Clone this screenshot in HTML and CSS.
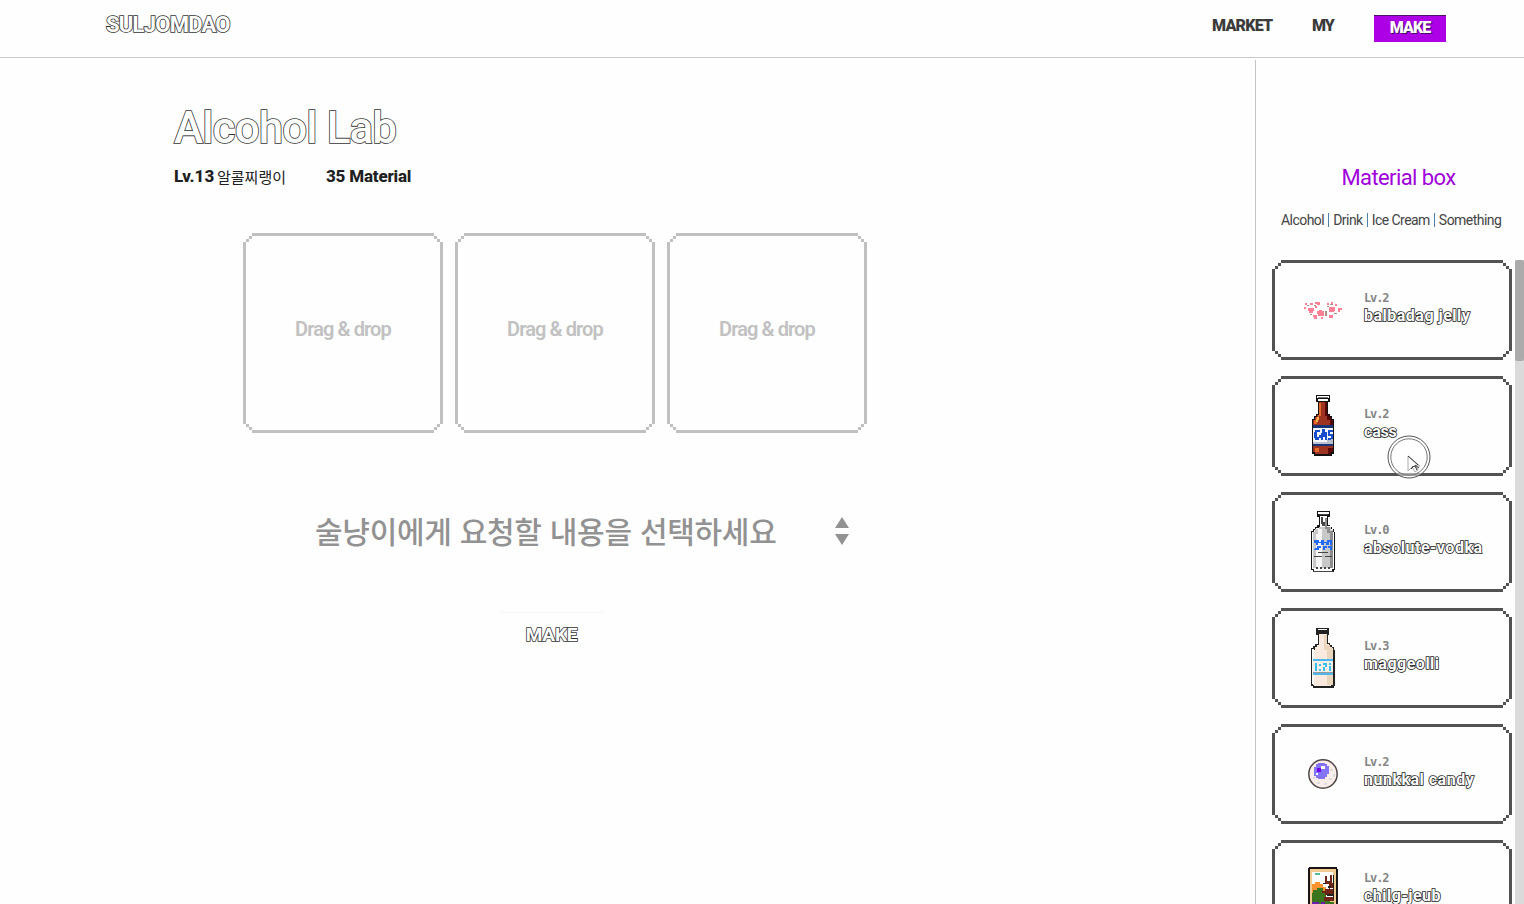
FILE: index.html
```html
<!DOCTYPE html>
<html lang="ko">
<head>
<meta charset="utf-8">
<title>Alcohol Lab</title>
<link rel="stylesheet" href="styles.css">
</head>
<body>
<header class="header">
  <a class="logo">SULJOMDAO</a>
  <nav class="nav">
    <a class="nav-market">MARKET</a>
    <a class="nav-my">MY</a>
    <a class="nav-make"><span>MAKE</span></a>
  </nav>
</header>
<div class="page">
  <main class="lab">
    <h1 class="title">Alcohol Lab</h1>
    <div class="info">
      <span class="level">Lv.13</span><span class="user">알콜찌랭이</span><span class="count">35 Material</span>
    </div>
    <div class="slots">
      <div class="slot pixel-box"><span>Drag &amp; drop</span></div>
      <div class="slot pixel-box"><span>Drag &amp; drop</span></div>
      <div class="slot pixel-box"><span>Drag &amp; drop</span></div>
    </div>
    <div class="request">
      <span>술냥이에게 요청할 내용을 선택하세요</span>
      <svg width="14" height="28" viewBox="0 0 14 28"><path d="M7 0l7 11H0zM7 28l7-11H0z" fill="#929292"/></svg>
    </div>
    <button class="make-button">MAKE</button>
  </main>
  <aside class="box">
    <h2 class="box-title">Material box</h2>
    <div class="tabs"><span>Alcohol</span><i></i><span>Drink</span><i></i><span>Ice Cream</span><i></i><span>Something</span></div>
    <div class="list-wrap">
      <div class="list">
        <article class="card pixel-box">
          <svg class="icon" viewBox="2 1 48 68" shape-rendering="crispEdges">
            <path fill="#ff7f94" d="M11 32h6v3h-1v2h-4v-2h-1zM20 35h2v-1h3v1h2v5h-6v-2h-1zM32 31h6v4h-1v1h-5zM41 32h4v2h-2v2h-2zM8 27h2v2H8zM13 27h3v2h-3zM18 26h5v3h-3v-1h-2zM7 31h2v2H7zM18 30h2v2h-2zM16 39h4v4h-3v-2h-1zM32 39h4v3h-4zM30 27h2v2h-2zM34 26h2v2h-2zM38 28h2v2h-2zM24 41h2v2h-2z"/>
            <path fill="#a98f84" d="M10 29h2v1h-2zM17 29h2v1h-2zM33 28h3v1h-3zM28 35h2v5h-2zM30 30h2v1h-2zM37 37h3v1h-3zM13 38h2v1h-2z"/>
          </svg>
          <div class="text"><p class="lv">Lv.2</p><p class="name">balbadag jelly</p></div>
        </article>
        <article class="card pixel-box">
          <svg class="icon" viewBox="0 0 48 68" shape-rendering="crispEdges">
            <path fill="#111" d="M17 2h14v7h-2v12h2v2h2v3h2v35h-2v2H15v-2h-2V26h2v-3h2v-2h2V9h-2z"/>
            <path fill="#fff" d="M18 3h12v2H18zM19 6h10v2H19z"/><path fill="#777" d="M19 4h10v1H19z"/>
            <path fill="#9d3421" d="M20 9h8v13h2v2h2v3h2v32h-2v2H16v-2h-2V27h2v-3h2v-2h2z"/>
            <path fill="#e4682a" d="M20 10h2v13h-2v3h-2v5h-3v-4h2v-3h2v-2h1zM16 55h4v4h-4z"/>
            <path fill="#ffb04c" d="M18 24h2v3h-1v2h-2v-3h1z"/>
            <path fill="#5a0705" d="M26 9h2v13h2v2h2v3h2v7h-3v-7h-3v-4h-2zM29 55h5v4h-2v2h-3z"/>
            <path fill="#173576" d="M14 32h20v3H14zM14 50h20v3H14z"/><path fill="#f3f6fa" d="M14 35h20v16H14z"/><path fill="#b8c1cd" d="M28 46h6v5h-6zM14 49h14v2H14z"/>
            <path fill="#164dcf" d="M16 37h5v2h-3v5h2v-2h2v3h-2v2h-4v-2h-1v-6h1zM23 36h3v3h2v8h-2v-3h-2v3h-2v-7h1zM29 37h5v2h-3v2h3v5h-2v1h-3v-2h3v-2h-3z"/>
          </svg>
          <div class="text"><p class="lv">Lv.2</p><p class="name cass">cass</p></div>
          <svg class="cursor" viewBox="0 0 46 46"><g fill="none" stroke="#555"><circle cx="23" cy="23" r="21" fill="#fff" fill-opacity=".5"/><circle cx="23" cy="23" r="18.2" stroke="#777"/></g><path d="M22 22v15l4-4 3 5 3-2-2-4h4z" fill="#fff" stroke="#aaa"/><path d="M22 22l10 9M26 33l3-1 2 4M29 31l4 3M25 35l2-2" fill="none" stroke="#333"/></svg>
        </article>
        <article class="card pixel-box">
          <svg class="icon" viewBox="0 0 48 68" shape-rendering="crispEdges">
            <path fill="#151515" d="M18 2h13v6h-2v8h2v2h2v2h2v3h1v38h-1v2H14v-2h-2V22h2v-2h2v-2h2v-2h2V8h-2z"/>
            <path fill="#fff" d="M19 3h11v2H19zM21 7h7v10h3v3h3v3h1v37h-2v2H15v-2h-2V23h2v-2h2v-2h4z"/>
            <path fill="#c8c8c8" d="M20 18h12v3h2v38H14V23h2v-3h4z"/><path fill="#f6f6f6" d="M19 20h4v40h-6V25h2z"/><path fill="#8d8d8d" d="M26 9h2v9h3v4h3v37h-3V24h-3v-4h-2z"/>
            <path fill="#464646" d="M20 5h9v1h-9zM22 8h2v5h2v4h-3v-2h-1zM19 43h10v1H19zM15 47h8v1h-8zM26 47h7v1h-7zM17 58h2v2h-2zM21 58h2v2h-2zM25 58h2v2h-2zM29 58h2v2h-2zM14 62h20v1H14z"/>
            <path fill="#1f6bff" d="M15 31h5v2h2v-2h3v2h3v-2h5v5h-2v-3h-1v3h-3v-2h-2v2h-3v-2h-3v2h-2v-2h-2zM18 37h4v2h-2v2h-4v-2h2zM24 37h4v2h-2v2h-2zM29 37h4v4h-2v-2h-2zM15 40h3v1h-3z"/>
          </svg>
          <div class="text"><p class="lv">Lv.0</p><p class="name">absolute-vodka</p></div>
        </article>
        <article class="card pixel-box">
          <svg class="icon" viewBox="0 0 48 68" shape-rendering="crispEdges">
            <path fill="#222" d="M17 3h13v7h-1v8h2v2h2v2h2v3h1v36h-1v2H14v-2h-2V23h2v-2h2v-2h3V10h-2z"/>
            <path fill="#f9e9df" d="M20 9h8v10h2v3h3v3h1v35h-2v1H15v-1h-1V25h2v-3h2v-2h2z"/>
            <path fill="#fff" d="M19 4h9v1h-9zM13 24h2v35h-2z"/><path fill="#ead6bd" d="M25 10h3v10h3v3h3v37h-6V25h-3z"/>
            <path fill="#4cb8ef" d="M14 34h20v2H14zM14 48h20v2H14z"/><path fill="#f9eee7" d="M14 36h20v12H14z"/><path fill="#35c0ee" d="M16 38h2v8h-2zM20 39h2v2h-2zM20 44h2v2h-2zM24 38h4v4h-2v4h-2v-4h2v-2h-2zM30 41h2v5h-2zM30 38h2v2h-2z"/>
            <path fill="#999" d="M14 47h20v1H14z"/>
          </svg>
          <div class="text"><p class="lv">Lv.3</p><p class="name">maggeolli</p></div>
        </article>
        <article class="card pixel-box">
          <svg class="icon" viewBox="0 1 48 68">
            <circle cx="24" cy="34" r="14.2" fill="#fbeeea" stroke="#4d4545" stroke-width="1.5"/>
            <g shape-rendering="crispEdges">
            <path fill="#d9dddf" d="M31 29h3v2h-3zM34 34h2v3h-2zM30 38h3v2h-3zM25 43h3v2h-3zM18 42h3v2h-3zM14 37h2v2h-2z"/>
            <path fill="#8375f5" d="M17 24h2v-1h7v1h2v2h2v8h-2v3h-2v2h-7v-1h-2v-2h-2v-9h2z"/><path fill="#7200ef" d="M18 28h4v4h-4z"/><path fill="#fff" d="M22 26h4v3h-4zM17 33h2v2h-2z"/>
            </g>
          </svg>
          <div class="text"><p class="lv">Lv.2</p><p class="name">nunkkal candy</p></div>
        </article>
        <article class="card pixel-box">
          <svg class="icon" viewBox="0 1 48 68" shape-rendering="crispEdges">
            <path fill="#191313" d="M10 11h28v2h1v57H9V12h1z"/><path fill="#f2cb90" d="M11 13h26v57H11z"/><path fill="#fff" d="M13 16h21v25H13z"/>
            <path fill="#4ebd9c" d="M16 17h5v2h-5z"/><path fill="#fa922e" d="M13 28h3v-2h5v2h3v3h3v12H13z"/><path fill="#3a751d" d="M14 34h4v-2h6v3h3v7h4v4h4v16H13V37h1z"/>
            <path fill="#712516" d="M26 20h2v5h3v-6h2v8h2v5h-4v4h-5v-3h4v-5h-4zM23 35h5v-2h7v6h-9v-2h-3zM25 41h10v4H25z"/><path fill="#222" d="M24 27h3v1h-3zM29 30h3v2h-3zM28 38h7v2h-7zM34 19h1v24h-1z"/>
            <path fill="#6b20ad" d="M13 46h7v9h-7zM22 46h4v6h-4z"/><path fill="#fff" d="M18 49h14v12H18z"/>
          </svg>
          <div class="text"><p class="lv">Lv.2</p><p class="name">chilg-jeub</p></div>
        </article>
      </div>
      <div class="scrollbar"><div class="thumb"></div></div>
    </div>
  </aside>
</div>
</body>
</html>
```
FILE: styles.css
```css
* { box-sizing: border-box; }
body { margin: 0; height: 904px; overflow: hidden; background: #fefefe; color: #222; font-family: Roboto, "Noto Sans CJK KR", sans-serif; white-space: nowrap; display: flex; flex-direction: column; }
h1, h2, p { margin: 0; }
.header { flex: none; height: 58px; border-bottom: 1px solid #c9c9c9; padding: 0 78px 0 106px; display: flex; justify-content: space-between; }
.logo, .title, .make-button, .name { color: #fff; -webkit-text-stroke: 1.6px #333; paint-order: stroke fill; }
.logo { padding-top: 11px; font-size: 22px; line-height: 28px; font-weight: 700; letter-spacing: -.75px; }
.nav { display: flex; font-size: 16px; line-height: 20px; font-weight: 900; color: #3b3b3b; padding-top: 15px; }
.nav a { padding-top: 1px; }
.nav-market { width: 100px; letter-spacing: -.75px; }
.nav-my { width: 62px; letter-spacing: -1px; }
.nav .nav-make { width: 72px; height: 27px; padding: 2px 0 0; background: #ad00e6; border-top: 1px solid #4d1268; color: #fff; text-align: center; letter-spacing: -.9px; text-shadow: 1px 1px #43105d; }
.page { flex: 1; min-height: 0; display: flex; padding-top: 2px; }
.lab { width: 1255px; padding: 41px 0 0 174px; }
.title { font-size: 44px; line-height: 54px; font-weight: 500; letter-spacing: -.9px; }
.info { display: flex; align-items: center; height: 24px; margin-top: 9px; font-size: 17px; font-weight: 800; color: #202020; }
.level { width: 43px; }
.user { width: 109px; font: 400 15px "Noto Sans CJK KR", sans-serif; }
.count { letter-spacing: -.2px; }
.pixel-box {
  --s: linear-gradient(var(--c), var(--c));
  background:
    var(--s) 50% 0 / calc(100% - 18px) 3px, var(--s) 50% 100% / calc(100% - 18px) 3px,
    var(--s) 0 50% / 3px calc(100% - 18px), var(--s) 100% 50% / 3px calc(100% - 18px),
    var(--s) left 6px top 3px / 3px 3px, var(--s) left 3px top 6px / 3px 3px,
    var(--s) right 6px top 3px / 3px 3px, var(--s) right 3px top 6px / 3px 3px,
    var(--s) left 6px bottom 3px / 3px 3px, var(--s) left 3px bottom 6px / 3px 3px,
    var(--s) right 6px bottom 3px / 3px 3px, var(--s) right 3px bottom 6px / 3px 3px;
  background-repeat: no-repeat;
}
.slots { display: flex; gap: 12px; margin: 45px 0 0 69px; }
.slot { --c: #c0c0c0; width: 200px; height: 200px; display: flex; justify-content: center; padding-top: 84px; color: #c1c1c1; font-size: 20px; line-height: 25px; font-weight: 600; letter-spacing: -.9px; }
.request { display: flex; align-items: center; justify-content: space-between; width: 534px; height: 48px; margin: 74px 0 0 141px; color: #929292; font: 500 30px/44px "Noto Sans CJK KR", sans-serif; letter-spacing: -.28px; }
.request span { padding-bottom: 3px; }
.make-button { display: block; width: 103px; height: 43px; margin: 57px 0 0 326px; padding: 1px 0 0; border: 0; border-top: 1px dotted #fbeee8; background: none; font: 700 19px Roboto, sans-serif; letter-spacing: -.2px; }
.box { width: 269px; border-left: 1px solid #c4c4c4; padding-top: 104px; display: flex; flex-direction: column; }
.box-title { padding-left: 17px; text-align: center; font-size: 22px; line-height: 28px; font-weight: 400; letter-spacing: -.6px; color: #a000db; }
.tabs { display: flex; align-items: center; gap: 4px; margin: 18px 0 0 25px; height: 20px; font-size: 14px; letter-spacing: -.54px; color: #444; }
.tabs i { width: 1px; height: 14px; background: #4f7fac; }
.list-wrap { display: flex; flex: 1; min-height: 0; margin-top: 30px; padding-left: 16px; gap: 3px; overflow: hidden; }
.list { width: 240px; display: flex; flex-direction: column; gap: 16px; }
.card { --c: #525252; flex: none; position: relative; width: 240px; height: 100px; display: flex; padding: 17px 0 0 27px; }
.icon { width: 48px; height: 68px; }
.text { padding: 14px 0 0 17px; }
.lv { font: 700 12px/15px "DejaVu Sans Mono", monospace; letter-spacing: -1.1px; color: #858585; }
.name { font-size: 16px; line-height: 20px; font-weight: 700; letter-spacing: .5px; -webkit-text-stroke: 1.6px #222; }
.cass { letter-spacing: -.2px; }
.cursor { position: absolute; left: 114px; top: 58px; width: 46px; height: 46px; }
.scrollbar { width: 9px; background: #dadada; }
.thumb { height: 101px; background: #ababab; border-radius: 2px; }
```
